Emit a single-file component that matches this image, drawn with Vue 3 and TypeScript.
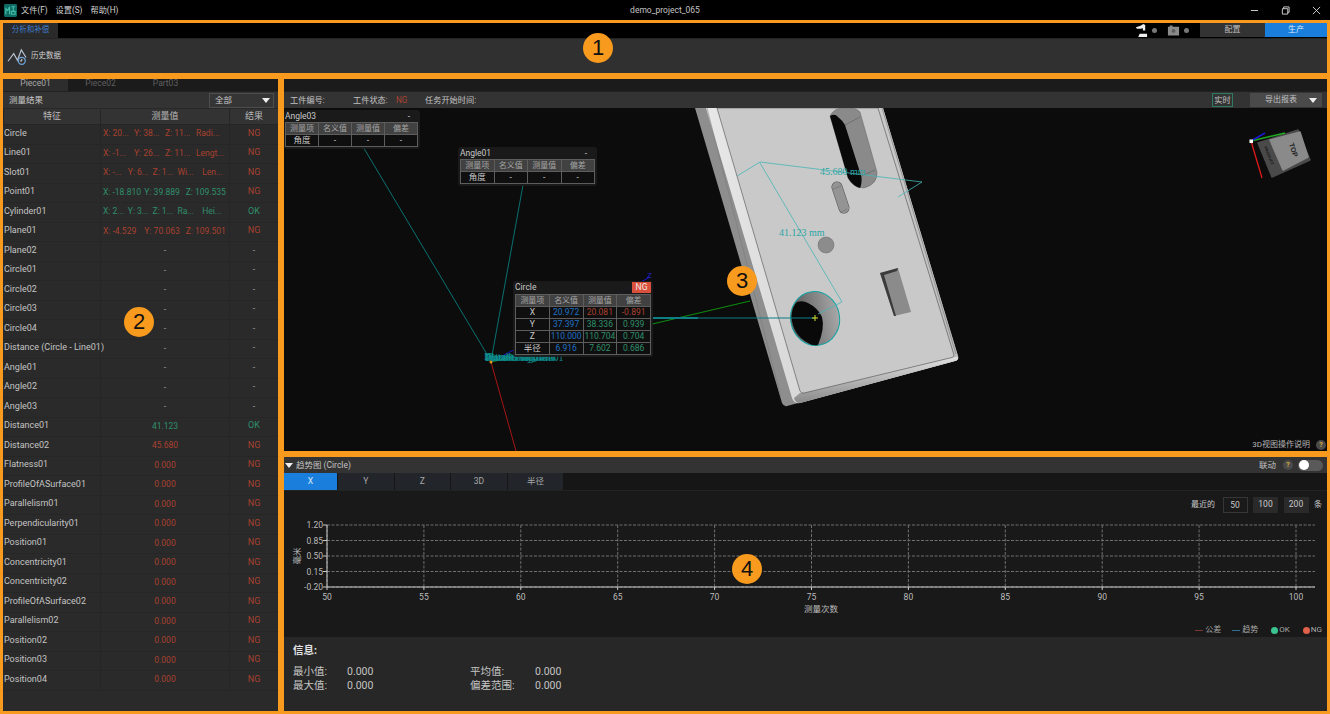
<template>
  <div class="app">
    <header class="titlebar">
      <svg class="logo" viewBox="0 0 14 14">
        <rect width="14" height="14" rx="1.5" fill="#0f6b63" />
        <path d="M2 11V5l2 2 2-4v8M8 3h4M10 3v5M8 8h4v3H8z" fill="none" stroke="#43c0a8" stroke-width="1.2" />
      </svg>
      <nav class="menu">
        <span>文件(F)</span>
        <span>设置(S)</span>
        <span>帮助(H)</span>
      </nav>
      <div class="doc-title">demo_project_065</div>
      <div class="win-btns">
        <svg viewBox="0 0 10 10"><path d="M1 5h8" stroke="#ddd" fill="none" /></svg>
        <svg viewBox="0 0 10 10"><path d="M1.5 3h6v6h-6zM3 3V1h6v6H7.5" stroke="#ddd" fill="none" /></svg>
        <svg viewBox="0 0 10 10"><path d="M1 1l8 8M9 1l-8 8" stroke="#ddd" fill="none" /></svg>
      </div>
    </header>

    <section class="panel ribbon">
      <div class="ribbon-tabs">
        <div class="ribbon-tab">分析和补偿</div>
        <div class="status-icons">
          <svg class="st-icon" viewBox="0 0 14 14">
            <path d="M1 3.5 6 2l3-2 2 1v6h-2.500V4.500L6 5 2 5zM5 10.500h8V14H3.500z" fill="#eee" />
          </svg>
          <i class="st-dot"></i>
          <svg class="st-icon cam" viewBox="0 0 14 14">
            <path d="M1 3h2V1.500h3V3h7v9.500H1z" fill="#8a8a8a" />
            <circle cx="7" cy="7.500" r="2" fill="#5c5c5c" />
          </svg>
          <i class="st-dot"></i>
        </div>
        <div class="mode-tab">配置</div>
        <div class="mode-tab on">生产</div>
      </div>
      <div class="ribbon-body">
        <svg class="hist-icon" viewBox="0 0 22 20">
          <path d="M1 15l6-8 4 7 4-11 5 8" fill="none" stroke="#b9c4d2" stroke-width="1.200" />
          <circle cx="15.500" cy="14.500" r="3.700" fill="#303030" stroke="#6fa4d8" stroke-width="1.300" />
          <path d="M15.500 12.500v2.200h-2" fill="none" stroke="#d5dbe2" />
        </svg>
        <span>历史数据</span>
      </div>
      <i class="badge badge-1">1</i>
    </section>

    <div class="workspace">
      <section class="panel results">
        <div class="piece-tabs">
          <div class="piece-tab on">Piece01</div>
          <div class="piece-tab">Piece02</div>
          <div class="piece-tab">Part03</div>
        </div>
        <div class="results-bar">
          <span>测量结果</span>
          <div class="select">全部<i class="caret"></i></div>
        </div>
        <div class="res-row res-head">
          <div>特征</div>
          <div>测量值</div>
          <div>结果</div>
        </div>
        <div class="res-list">
          <div v-for="row in rows" :key="row.name" class="res-row">
            <div class="feat">{{ row.name }}</div>
            <div class="vals" :class="[row.tone, 'cols-' + row.vals.length]">
              <span v-for="(v, i) in row.vals" :key="i">{{ v }}</span>
            </div>
            <div class="verdict" :class="verdictTone(row.result)">{{ row.result }}</div>
          </div>
        </div>
        <i class="badge badge-2">2</i>
      </section>

      <div class="right-col">
        <section class="panel viewer">
          <div class="viewer-strip"></div>
          <div class="info-bar">
            <span class="i-no">工件编号:</span>
            <span class="i-state">工件状态:</span>
            <span class="i-ng">NG</span>
            <span class="i-time">任务开始时间:</span>
            <div class="live">实时</div>
            <div class="export">导出报表<i class="caret"></i></div>
          </div>
          <div class="scene">
            <svg class="scene-svg" viewBox="284 108 1043 343">
              <defs>
                <linearGradient id="wall" x1="0" y1="0" x2="1" y2="0">
                  <stop offset="0" stop-color="#555" />
                  <stop offset="1" stop-color="#a8a8a8" />
                </linearGradient>
                <linearGradient id="bevel" x1="0" y1="0" x2="1" y2="0">
                  <stop offset="0" stop-color="#e8e8e8" />
                  <stop offset="1" stop-color="#bdbdbd" />
                </linearGradient>
                <linearGradient id="lip" x1="0" y1="0" x2="0" y2="1">
                  <stop offset="0" stop-color="#e0e0e0" />
                  <stop offset="1" stop-color="#8a8a8a" />
                </linearGradient>
              </defs>

              <!-- part -->
              <path d="M695 108h188l75 248q1 4-3 5L787 406q-3 1-5-3z" fill="#8e8e8e" />
              <path d="M706 108h177l75 248q1 4-3 5L800 403q-6 1-8-5z" fill="url(#bevel)" />
              <path d="M800 393l155-36 3 0q1 3-3 4L800 403q-5 0-6-5z" fill="url(#lip)" />
              <path d="M717 108h161l76 247q0 2-2 2.500L804 393q-3 .5-4-2z" fill="#c9c9c9" stroke="#4d4d4d" stroke-width=".6" />
              <path d="M707 108l74 290" fill="none" stroke="#777" stroke-width=".5" />
              <path d="M882 108l74 246" fill="none" stroke="#666" stroke-width=".5" />

              <!-- long slot -->
              <path d="M830 116Q834 108 843 108 856 107 860 112L877 172Q878 184 864 188 853 188 848 178Z" fill="#8a8a8a" stroke="#555" stroke-width=".4" />
              <path d="M830 116Q835 113 838 117 842 120 845 125L861.500 177Q862 184 860 188 853 186 848 178Z" fill="#090909" />
              <path d="M845 125l15-8M861.700 176l13.300-6" stroke="#555" stroke-width=".5" fill="none" />

              <!-- small slot -->
              <path d="M837 187l7 21" stroke="#555" stroke-width="11" stroke-linecap="round" fill="none" />
              <path d="M837 187l7 21" stroke="#949494" stroke-width="10" stroke-linecap="round" fill="none" />
              <path d="M833 189l8-3M840 213l7-4" stroke="#666" stroke-width=".5" fill="none" />

              <circle cx="826" cy="245" r="8" fill="#8c8c8c" stroke="#666" stroke-width=".5" />
              <path d="M880 273l18-5 13 44-17 4z" fill="#8b8b8b" />
              <path d="M880 273l18-5-1 3-13 4 12 41-2 0z" fill="#3b3b3b" />

              <!-- big hole -->
              <ellipse cx="815" cy="318.500" rx="24.500" ry="27" transform="rotate(-10 815 318)" fill="url(#wall)" stroke="#0fa3a3" stroke-width="1" />
              <path d="M791.500 317Q792 306 797 302 803 300 808 303 818 308 822 317 825 328 818 345 812 346 808 343 793 335 791.500 317Z" fill="#090909" />

              <!-- dimension lines -->
              <path d="M737 176l23-14 162 20-24 15" fill="none" stroke="#48b5b5" stroke-width=".8" />
              <path d="M760 163l82 139-24 12" fill="none" stroke="#48b5b5" stroke-width=".8" />
              <text x="820" y="175" class="dim">45.680 mm</text>
              <text x="779" y="236" class="dim">41.123 mm</text>

              <!-- leaders and axes -->
              <path d="M356 135l135 226M523 185l-32 176" fill="none" stroke="#0a7d7d" stroke-width=".9" />
              <path d="M491 362l259-61" stroke="#0f8a0f" stroke-width="1.200" fill="none" />
              <path d="M491 362l159-85" stroke="#1818c8" stroke-width="1" fill="none" />
              <path d="M491 362l25 89" stroke="#a81515" stroke-width="1" fill="none" />
              <path d="M653 318h162" stroke="#0d7f85" stroke-width="1" fill="none" />
              <path d="M653 318h45" stroke="#0d7f85" stroke-width="2" fill="none" />
              <path d="M812 318h6M815 315v6" stroke="#d5e02a" stroke-width="1" fill="none" />
              <text x="647" y="278" class="z-label">Z</text>
              <text x="485" y="361" class="dim leader">Distance01</text>
              <text x="486" y="361" class="dim leader">Plane01 Cylinder</text>
              <text x="485" y="361" class="dim leader">Point01 Segment01</text>
              <text x="488" y="360" class="dim leader">Parallelism01</text>
              <text x="484" y="360" class="dim leader">Distance Segment</text>
              <circle cx="491" cy="362" r="1.500" fill="#e39a1c" />

              <!-- view cube -->
              <path d="M1258 143l40-13 12 30-38 17z" fill="#4a4a4a" stroke="#4a4a4a" stroke-width="1.500" stroke-linejoin="round" />
              <path d="M1270 140l30-8 8 25-25 13z" fill="#8a8a8a" stroke="#8a8a8a" stroke-width="1.500" stroke-linejoin="round" />
              <path d="M1251 141l34-8" stroke="#1fae1f" stroke-width="1.500" fill="none" />
              <path d="M1251 141l14-8" stroke="#1a1ad0" stroke-width="1.500" fill="none" />
              <path d="M1251 141l11 37" stroke="#e01818" stroke-width="1.300" fill="none" />
              <rect x="1249.500" y="139.500" width="3.500" height="3.500" fill="#fff" />
              <text class="cube-top" transform="translate(1289 144) rotate(72)">TOP</text>
              <text class="cube-side" transform="translate(1264 147) rotate(68)">PRODUCT</text>
            </svg>

            <div v-for="card in cards" :key="card.title" class="card" :class="card.cls">
              <div class="card-head">
                <span>{{ card.title }}</span>
                <span v-if="card.status === '-'" class="card-dash">-</span>
                <span v-else class="card-ng">{{ card.status }}</span>
              </div>
              <table>
                <thead>
                  <tr>
                    <th>测量项</th>
                    <th>名义值</th>
                    <th>测量值</th>
                    <th>偏差</th>
                  </tr>
                </thead>
                <tbody>
                  <tr v-for="line in card.lines" :key="line.item">
                    <td>{{ line.item }}</td>
                    <td :class="line.nomTone">{{ line.nom }}</td>
                    <td :class="line.tone">{{ line.meas }}</td>
                    <td :class="line.tone">{{ line.dev }}</td>
                  </tr>
                </tbody>
              </table>
            </div>

            <div class="help-3d">
              <span>3D视图操作说明</span>
              <i class="q">?</i>
            </div>
          </div>
          <i class="badge badge-3">3</i>
        </section>

        <section class="panel trend">
          <div class="trend-head">
            <i class="caret"></i>
            <span>趋势图 (Circle)</span>
            <span class="link-label">联动</span>
            <i class="q">?</i>
            <div class="toggle"><i></i></div>
          </div>
          <div class="axis-tabs">
            <div v-for="(t, i) in axisTabs" :key="t" class="axis-tab" :class="{ on: i === 0 }">{{ t }}</div>
          </div>
          <div class="chart-area">
            <div class="range-row">
              <span>最近的</span>
              <div class="range-btn sel">50</div>
              <div class="range-btn">100</div>
              <div class="range-btn">200</div>
              <span class="range-unit">条</span>
            </div>
            <svg class="chart" viewBox="284 520 1043 100">
              <g class="grid">
                <line v-for="y in yGrid" :key="y.label" x1="327" x2="1315" :y1="y.y" :y2="y.y" />
                <line v-for="x in xTicks" :key="x.label" :x1="x.x" :x2="x.x" y1="525" y2="587" />
              </g>
              <path d="M327 525v62h988" class="axis" />
              <g class="ticks">
                <line v-for="y in yGrid" :key="y.label" x1="323" x2="327" :y1="y.y" :y2="y.y" />
                <line v-for="x in xTicks" :key="x.label" :x1="x.x" :x2="x.x" y1="587" y2="590" />
              </g>
              <text v-for="y in yGrid" :key="y.label" x="323" :y="y.y + 3" class="y-lab">{{ y.label }}</text>
              <text v-for="x in xTicks" :key="x.label" :x="x.x" y="600" class="x-lab">{{ x.label }}</text>
              <text class="y-title" transform="translate(300 556) rotate(-90)">毫米</text>
              <text x="821" y="612" class="x-title">测量次数</text>
            </svg>
            <div class="legend">
              <i class="lg-line red"></i><span>公差</span>
              <i class="lg-line blue"></i><span>趋势</span>
              <i class="lg-dot ok"></i><span>OK</span>
              <i class="lg-dot ng"></i><span>NG</span>
            </div>
          </div>
          <div class="stats">
            <div class="stats-title">信息:</div>
            <div class="stats-grid">
              <template v-for="s in stats" :key="s.label">
                <span>{{ s.label }}</span>
                <span>{{ s.value }}</span>
              </template>
            </div>
          </div>
          <i class="badge badge-4">4</i>
        </section>
      </div>
    </div>
  </div>
</template>

<script setup lang="ts">
interface ResultRow {
  name: string
  vals: string[]
  tone: string
  result: string
}

interface CardLine {
  item: string
  nom: string
  meas: string
  dev: string
  nomTone?: string
  tone?: string
}

const row = (name: string, vals: string[], tone: string, result: string): ResultRow => ({ name, vals, tone, result })

const rows: ResultRow[] = [
  row('Circle', ['X: 20...', 'Y: 38...', 'Z: 11...', 'Radi...'], 'red', 'NG'),
  row('Line01', ['X: -1...', 'Y: 26...', 'Z: 11...', 'Lengt...'], 'red', 'NG'),
  row('Slot01', ['X: -...', 'Y: 6...', 'Z: 1...', 'Wi...', 'Len...'], 'red', 'NG'),
  row('Point01', ['X: -18.810', 'Y: 39.889', 'Z: 109.535'], 'green', 'NG'),
  row('Cylinder01', ['X: 2...', 'Y: 3...', 'Z: 1...', 'Ra...', 'Hei...'], 'green', 'OK'),
  row('Plane01', ['X: -4.529', 'Y: 70.063', 'Z: 109.501'], 'red', 'NG'),
  ...['Plane02', 'Circle01', 'Circle02', 'Circle03', 'Circle04', 'Distance (Circle - Line01)', 'Angle01', 'Angle02', 'Angle03'].map(
    (n) => row(n, ['-'], 'plain', '-')
  ),
  row('Distance01', ['41.123'], 'green', 'OK'),
  row('Distance02', ['45.680'], 'red', 'NG'),
  ...[
    'Flatness01',
    'ProfileOfASurface01',
    'Parallelism01',
    'Perpendicularity01',
    'Position01',
    'Concentricity01',
    'Concentricity02',
    'ProfileOfASurface02',
    'Parallelism02',
    'Position02',
    'Position03',
    'Position04'
  ].map((n) => row(n, ['0.000'], 'red', 'NG'))
]

const verdictTone = (r: string) => (r === 'NG' ? 'red' : r === 'OK' ? 'green' : 'plain')

const emptyAngle: CardLine[] = [{ item: '角度', nom: '-', meas: '-', dev: '-' }]

const cards = [
  { title: 'Angle03', cls: 'card-a3', status: '-', lines: emptyAngle },
  { title: 'Angle01', cls: 'card-a1', status: '-', lines: emptyAngle },
  {
    title: 'Circle',
    cls: 'card-c',
    status: 'NG',
    lines: [
      { item: 'X', nom: '20.972', meas: '20.081', dev: '-0.891', nomTone: 'blue', tone: 'red' },
      { item: 'Y', nom: '37.397', meas: '38.336', dev: '0.939', nomTone: 'blue', tone: 'green' },
      { item: 'Z', nom: '110.000', meas: '110.704', dev: '0.704', nomTone: 'blue', tone: 'green' },
      { item: '半径', nom: '6.916', meas: '7.602', dev: '0.686', nomTone: 'blue', tone: 'green' }
    ] as CardLine[]
  }
]

const axisTabs = ['X', 'Y', 'Z', '3D', '半径']

const yGrid = [
  { label: '1.20', y: 525 },
  { label: '0.85', y: 540.5 },
  { label: '0.50', y: 556 },
  { label: '0.15', y: 571.5 },
  { label: '-0.20', y: 587 }
]

const xTicks = Array.from({ length: 11 }, (_, i) => ({
  label: String(50 + i * 5),
  x: 327 + i * 96.9
}))

const stats = [
  { label: '最小值:', value: '0.000' },
  { label: '平均值:', value: '0.000' },
  { label: '最大值:', value: '0.000' },
  { label: '偏差范围:', value: '0.000' }
]
</script>

<style>
html,
body {
  margin: 0;
  background: #000;
}
</style>

<style scoped>
.app {
  width: 1330px;
  height: 714px;
  display: flex;
  flex-direction: column;
  overflow: hidden;
  background: #000;
  color: #c8c8c8;
  font-family: Roboto, "Noto Sans CJK SC", sans-serif;
  font-size: 9px;
  line-height: 1;
}

i {
  font-style: normal;
  display: block;
}

.titlebar {
  height: 20px;
  flex: none;
  display: flex;
  align-items: center;
  position: relative;
  padding-left: 4px;
}

.logo {
  width: 13px;
  height: 13px;
}

.menu {
  display: flex;
  gap: 8px;
  margin-left: 4px;
  color: #d2d2d2;
  font-size: 8.200px;
}

.doc-title {
  position: absolute;
  left: 0;
  right: 0;
  text-align: center;
  color: #c4c4c4;
  font-size: 8.500px;
}

.win-btns {
  margin-left: auto;
  display: flex;
  gap: 22px;
  padding-right: 9px;
}

.win-btns svg {
  width: 9px;
  height: 9px;
}

.panel {
  position: relative;
  box-sizing: border-box;
  border: 3px solid #f79a1e;
}

.badge {
  position: absolute;
  width: 30px;
  height: 30px;
  border-radius: 50%;
  background: #f79a1e;
  color: #111;
  font: 400 22px/30px "Liberation Sans", sans-serif;
  text-align: center;
  z-index: 3;
}

.badge-1 {
  left: 580px;
  top: 10px;
}

.badge-2 {
  left: 121px;
  top: 228px;
}

.badge-3 {
  left: 443px;
  top: 187px;
}

.badge-4 {
  left: 448px;
  top: 97px;
}

.ribbon {
  height: 56px;
  flex: none;
  display: flex;
  flex-direction: column;
}

.ribbon-tabs {
  height: 15px;
  display: flex;
  background: #000;
  flex: none;
}

.ribbon-tab {
  width: 55px;
  background: #2a2a2a;
  color: #3f7fd0;
  font-size: 7.500px;
  text-align: center;
  line-height: 13px;
}

.status-icons {
  margin-left: auto;
  display: flex;
  align-items: center;
  gap: 2px;
  margin-right: 11px;
  height: 14px;
}

.st-icon {
  width: 13px;
  height: 13px;
}

.st-icon.cam {
  margin-left: 8px;
}

.st-dot {
  width: 5px;
  height: 5px;
  border-radius: 50%;
  background: #777;
  margin-left: 2px;
}

.mode-tab {
  width: 65px;
  height: 14px;
  background: #333;
  font-size: 8px;
  line-height: 13px;
  text-align: center;
  color: #bdbdbd;
}

.mode-tab.on {
  width: 62px;
  background: #1a7fdc;
  color: #dbe9f7;
}

.ribbon-body {
  flex: 1;
  display: flex;
  align-items: center;
  gap: 3px;
  background: #303030;
  border-top: 1px solid #242424;
  padding-left: 4px;
  font-size: 7.500px;
  color: #cfcfcf;
}

.hist-icon {
  width: 21px;
  height: 19px;
}

.workspace {
  flex: 1;
  min-height: 0;
  display: flex;
}

.results {
  width: 281px;
  flex: none;
  display: flex;
  flex-direction: column;
  background: #2a2a2a;
}

.piece-tabs {
  height: 12px;
  display: flex;
  background: #1b1b1b;
  flex: none;
}

.piece-tab {
  width: 65px;
  text-align: center;
  line-height: 9px;
  color: #5f5f5f;
  font-size: 8.500px;
}

.piece-tab.on {
  background: #2d2d2d;
  color: #a8a8a8;
}

.results-bar {
  height: 17px;
  flex: none;
  box-sizing: border-box;
  display: flex;
  align-items: center;
  justify-content: space-between;
  background: #333;
  padding: 0 4px 0 6px;
  border-top: 1px solid #222;
  font-size: 8.500px;
}

.select {
  width: 65px;
  height: 15px;
  box-sizing: border-box;
  border: 1px solid #4e4e4e;
  background: #353535;
  display: flex;
  align-items: center;
  justify-content: space-between;
  padding: 0 3px 0 5px;
}

.caret {
  width: 0;
  height: 0;
  border-left: 4px solid transparent;
  border-right: 4px solid transparent;
  border-top: 5px solid #eee;
}

.res-row {
  display: grid;
  grid-template-columns: 97px 129px 49px;
  height: 19.500px;
  box-sizing: border-box;
  align-items: stretch;
  border-bottom: 1px solid #262626;
}

.res-row > div {
  display: flex;
  align-items: center;
  padding-bottom: 2px;
  box-sizing: border-box;
}

.res-row > div + div {
  border-left: 1px solid #262626;
}

.res-head {
  height: 17px;
  flex: none;
  background: #333;
  border-top: 1px solid #282828;
  text-align: center;
}

.res-head > div {
  justify-content: center;
  color: #b8b8b8;
  padding-bottom: 0;
  border-left: 1px solid #242424;
}

.res-list {
  flex: 1;
}

.feat {
  padding-left: 1px;
  color: #c4c4c4;
  white-space: nowrap;
}

.res-row > .vals {
  display: grid;
  padding-left: 2px;
  padding-right: 2px;
  justify-items: start;
  font-size: 8.500px;
}

.vals span {
  white-space: nowrap;
}

.cols-1 {
  grid-template-columns: 1fr;
  justify-items: center !important;
}

.cols-3 {
  grid-template-columns: repeat(3, 1fr);
}

.cols-4 {
  grid-template-columns: repeat(4, 1fr);
}

.cols-5 {
  grid-template-columns: repeat(5, 1fr);
}

.res-row > .verdict {
  justify-content: center;
}

.red {
  color: #a9412f;
}

.green {
  color: #2f8f6c;
}

.blue {
  color: #1f6fc4;
}

.plain {
  color: #9a9a9a;
}

.right-col {
  flex: 1;
  min-width: 0;
  display: flex;
  flex-direction: column;
}

.viewer {
  height: 378px;
  flex: none;
  display: flex;
  flex-direction: column;
  background: #0c0c0c;
}

.viewer-strip {
  height: 12px;
  flex: none;
  background: #1b1b1b;
}

.info-bar {
  height: 17px;
  flex: none;
  display: flex;
  align-items: center;
  background: #333;
  border-top: 1px solid #222;
  box-sizing: border-box;
  color: #c2c2c2;
  font-size: 8.200px;
}

.i-no {
  margin-left: 6px;
  width: 63px;
}

.i-state {
  width: 43px;
}

.i-ng {
  width: 29px;
  color: #a9412f;
}

.live {
  margin-left: auto;
  width: 21px;
  height: 14px;
  box-sizing: border-box;
  border: 1px solid #2d7a5e;
  text-align: center;
  line-height: 12px;
}

.export {
  margin: 0 5px 0 17px;
  width: 72px;
  height: 14px;
  box-sizing: border-box;
  background: #4a4a4a;
  display: flex;
  align-items: center;
  justify-content: space-between;
  padding: 0 5px 0 15px;
  font-size: 8px;
}

.scene {
  position: relative;
  flex: 1;
  overflow: hidden;
}

.scene-svg {
  position: absolute;
  left: 0;
  top: 0;
  width: 1043px;
  height: 343px;
}

.dim {
  font: 10px "Liberation Serif", serif;
  fill: #2aa5a5;
}

.leader {
  fill: #0d8f8f;
}

.z-label {
  font: 8px "Liberation Sans", sans-serif;
  fill: #2222dd;
}

.cube-top {
  font: 700 7px "Liberation Sans", sans-serif;
  fill: #222;
}

.cube-side {
  font: 700 4px "Liberation Sans", sans-serif;
  fill: #1a1a1a;
}

.card {
  position: absolute;
  background: rgba(28, 28, 28, 0.92);
  border-radius: 3px;
  padding: 0 2px 2px 1px;
  box-sizing: border-box;
  color: #c8c8c8;
}

.card-a3 {
  left: 0;
  top: 2px;
  width: 136px;
}

.card-a1 {
  left: 174px;
  top: 39px;
  width: 139px;
  padding-left: 2px;
}

.card-c {
  left: 229px;
  top: 173px;
  width: 140px;
  padding-left: 2px;
}

.card-head {
  height: 12px;
  display: flex;
  align-items: center;
  justify-content: space-between;
  font-size: 8.500px;
  padding-right: 8px;
}

.card-c .card-head {
  height: 13px;
  padding-right: 0;
}

.card-ng {
  width: 19px;
  height: 11px;
  background: #d9503c;
  color: #f0e6e4;
  text-align: center;
  line-height: 11px;
}

.card table {
  width: 100%;
  table-layout: fixed;
  border-collapse: collapse;
  border: 1px solid #5d5d5d;
  font-size: 8.500px;
  text-align: center;
}

.card th,
.card td {
  border: 1px solid #5d5d5d;
  height: 11px;
  padding: 0;
  font-weight: 400;
}

.card th {
  background: #414141;
  color: #a5a5a5;
  font-size: 8px;
}

.card td {
  background: rgba(12, 12, 12, 0.8);
}

.card td.blue {
  color: #1f6fc4;
}

.card td.red {
  color: #a9412f;
}

.card td.green {
  color: #2f8f6c;
}

.help-3d {
  position: absolute;
  right: 0;
  bottom: 0;
  height: 12px;
  display: flex;
  align-items: center;
  gap: 6px;
  padding-right: 1px;
  font-size: 8px;
  color: #b5b5b5;
}

.q {
  width: 10px;
  height: 10px;
  border-radius: 50%;
  background: #4a4a4a;
  color: #d8b23c;
  font-size: 7px;
  font-weight: 700;
  line-height: 10px;
  text-align: center;
}

.trend {
  flex: 1;
  min-height: 0;
  display: flex;
  flex-direction: column;
}

.trend-head {
  height: 16px;
  flex: none;
  background: #333;
  display: flex;
  align-items: center;
  font-size: 8.500px;
  color: #c2c2c2;
}

.trend-head .caret {
  margin: 0 3px 0 1px;
}

.link-label {
  margin-left: auto;
  margin-right: 7px;
}

.toggle {
  width: 25px;
  height: 11px;
  border-radius: 6px;
  background: #595959;
  margin: 0 4px 0 5px;
  display: flex;
  align-items: center;
  padding-left: 1px;
  box-sizing: border-box;
}

.toggle i {
  width: 10px;
  height: 10px;
  border-radius: 50%;
  background: #fff;
}

.axis-tabs {
  height: 17px;
  flex: none;
  display: flex;
  gap: 1px;
  background: #161616;
  font-size: 8.500px;
}

.axis-tab {
  width: 55.600px;
  background: #22252a;
  color: #a8a8a8;
  text-align: center;
  line-height: 16px;
}

.axis-tab.on {
  width: 53px;
  background: #1a7fdc;
  color: #dbe9f7;
}

.chart-area {
  height: 147px;
  flex: none;
  background: #191919;
  border-top: 1px solid #222;
  box-sizing: border-box;
  display: flex;
  flex-direction: column;
}

.range-row {
  height: 29px;
  flex: none;
  display: flex;
  align-items: center;
  justify-content: flex-end;
  gap: 5.500px;
  padding: 0 5px 1px 0;
  box-sizing: border-box;
  font-size: 8px;
}

.range-btn {
  width: 25px;
  height: 16px;
  box-sizing: border-box;
  background: #2a2a2a;
  text-align: center;
  line-height: 15px;
  font-size: 8.500px;
}

.range-btn.sel {
  background: #1a1a1a;
  border: 1px solid #363636;
  margin-left: 2px;
}

.chart {
  width: 1043px;
  height: 100px;
  flex: none;
}

.grid line {
  stroke: #6e6e6e;
  stroke-width: 1;
  stroke-dasharray: 3 1.500;
}

.axis {
  fill: none;
  stroke: #c9c9c9;
  stroke-width: 1;
}

.ticks line {
  stroke: #c9c9c9;
}

.chart text {
  font-family: Roboto, "Noto Sans CJK SC", sans-serif;
  font-size: 8.500px;
  fill: #bcbcbc;
}

.chart .y-lab {
  text-anchor: end;
}

.chart .x-lab,
.chart .x-title,
.chart .y-title {
  text-anchor: middle;
}

.legend {
  flex: 1;
  display: flex;
  align-items: center;
  justify-content: flex-end;
  padding: 3px 5px 0 0;
  font-size: 8px;
  color: #a8a8a8;
}

.lg-line {
  width: 8px;
  height: 1px;
  margin: 0 2px 0 11px;
}

.lg-line.red {
  background: #7a3a30;
}

.lg-line.blue {
  background: #2f6f8f;
}

.lg-dot {
  width: 7px;
  height: 7px;
  border-radius: 50%;
  margin: 0 1px 0 13px;
}

.lg-dot.ok {
  background: #3bc48f;
}

.lg-dot.ng {
  background: #e0604a;
}

.stats {
  flex: 1;
  background: #272727;
  padding: 9px 0 0 9px;
  font-size: 10.500px;
  color: #c4c4c4;
}

.stats-title {
  font-weight: 700;
  color: #e2e2e2;
  font-size: 10.500px;
  margin-bottom: 9px;
}

.stats-grid {
  display: grid;
  grid-template-columns: 54px 123px 65px 60px;
  row-gap: 2px;
  line-height: 12px;
}
</style>
